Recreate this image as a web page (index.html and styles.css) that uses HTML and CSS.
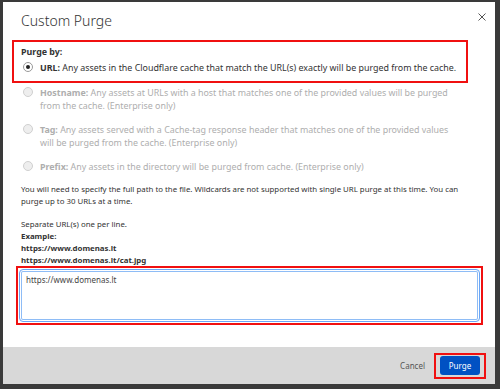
FILE: index.html
```html
<!DOCTYPE html>
<html>
<head>
<meta charset="utf-8">
<link rel="stylesheet" href="styles.css">
</head>
<body>
<div class="modal">
  <div class="header">
    <h1 class="title">Custom Purge</h1>
    <svg class="close" width="8" height="8" viewBox="0 0 8 8"><path d="M0.5 0.5 L7.5 7.5 M7.5 0.5 L0.5 7.5" stroke="#555" stroke-width="1"/></svg>
  </div>
  <div class="content">
    <div class="hl-box purge-by">
      <div class="label">Purge by:</div>
      <div class="option checked">
        <span class="radio on"></span>
        <div class="opt-text"><b>URL:</b> Any assets in the Cloudflare cache that match the URL(s) exactly will be purged from the cache.</div>
      </div>
    </div>
    <div class="option disabled">
      <span class="radio"></span>
      <div class="opt-text"><b>Hostname:</b> Any assets at URLs with a host that matches one of the provided values will be purged from the cache. (Enterprise only)</div>
    </div>
    <div class="option disabled">
      <span class="radio"></span>
      <div class="opt-text"><b>Tag:</b> Any assets served with a Cache-tag response header that matches one of the provided values will be purged from the cache. (Enterprise only)</div>
    </div>
    <div class="option disabled">
      <span class="radio"></span>
      <div class="opt-text"><b>Prefix:</b> Any assets in the directory will be purged from cache. (Enterprise only)</div>
    </div>
    <p class="info">You will need to specify the full path to the file. Wildcards are not supported with single URL purge at this time. You can purge up to 30 URLs at a time.</p>
    <p class="info">Separate URL(s) one per line.<br><b>Example:</b><br><b>https://www.domenas.lt</b><br><b>https://www.domenas.lt/cat.jpg</b></p>
    <div class="hl-box ta-box">
      <div class="textarea">https://www.domenas.lt</div>
    </div>
  </div>
  <div class="footer">
    <span class="cancel">Cancel</span>
    <div class="hl-box btn-box"><span class="btn">Purge</span></div>
  </div>
</div>
</body>
</html>
```
FILE: styles.css
```css
* { box-sizing: border-box; }
html, body { margin: 0; padding: 0; }
body {
  width: 500px;
  height: 389px;
  background: #3a3a3a;
  font-family: "Noto Sans", "Open Sans", sans-serif;
  color: #333;
  overflow: hidden;
}
.modal {
  position: absolute;
  left: 3px;
  top: 2px;
  width: 492px;
  height: 382px;
  background: #fff;
  display: flex;
  flex-direction: column;
}
.header {
  height: 37px;
  display: flex;
  align-items: center;
  justify-content: space-between;
  padding: 0 9px 0 18px;
}
.title {
  margin: 0;
  font-size: 14px;
  font-weight: 300;
  color: #333;
}
.close { margin-top: -8px; }
.content {
  flex: 1;
  padding: 1px 0 0 9px;
}
.hl-box { border: 2px solid #f01010; }
.purge-by {
  width: 456px;
  height: 43px;
  padding: 3px 0 0 7px;
}
.label {
  font-size: 8.9px;
  font-weight: 700;
  line-height: 13px;
}
.option {
  display: flex;
  align-items: flex-start;
  gap: 7px;
  font-size: 8.9px;
  line-height: 13px;
}
.purge-by .option { margin-top: 3px; padding-left: 2px; }
.content > .option { padding-left: 11px; margin-top: 3px; padding-right: 36px; }
.content > .option + .option { margin-top: 11px; }
.radio {
  flex: none;
  width: 10px;
  height: 10px;
  border-radius: 50%;
  border: 1px solid #d0d0d0;
  background: #eee;
  margin-top: 1px;
}
.radio.on {
  border: 1px solid #999;
  background: #fff;
  position: relative;
}
.radio.on::after {
  content: "";
  position: absolute;
  left: 2px; top: 2px;
  width: 4px; height: 4px;
  border-radius: 50%;
  background: #222;
}
.disabled { color: #aeaeae; }
.info {
  margin: 10px 0 0 9px;
  font-size: 7.85px;
  line-height: 12.3px;
  color: #333;
  padding-right: 20px;
}
.info + .info { margin-top: 10px; }
.ta-box {
  margin: -1px 0 0 4px;
  width: 467px;
  height: 59px;
  padding: 1px;
}
.textarea {
  height: 100%;
  border: 1px solid #6aa6f5;
  border-radius: 4px;
  box-shadow: 0 0 0 1px #fff inset, 0 0 0 2px #8ebcf6 inset;
  padding: 4px 6px;
  font-size: 8px;
  color: #444;
}
.footer {
  height: 37px;
  background: #d8d8d8;
  display: flex;
  align-items: center;
  justify-content: flex-end;
  padding-right: 9px;
  gap: 9px;
}
.cancel { font-size: 8px; color: #555; }
.btn-box {
  width: 52px;
  height: 26px;
  padding: 1px 4px;
  display: flex;
  align-items: center;
}
.btn {
  display: block;
  width: 40px;
  height: 19px;
  line-height: 19px;
  text-align: center;
  background: #0051c3;
  color: #fff;
  border-radius: 3px;
  font-size: 8px;
}
```
